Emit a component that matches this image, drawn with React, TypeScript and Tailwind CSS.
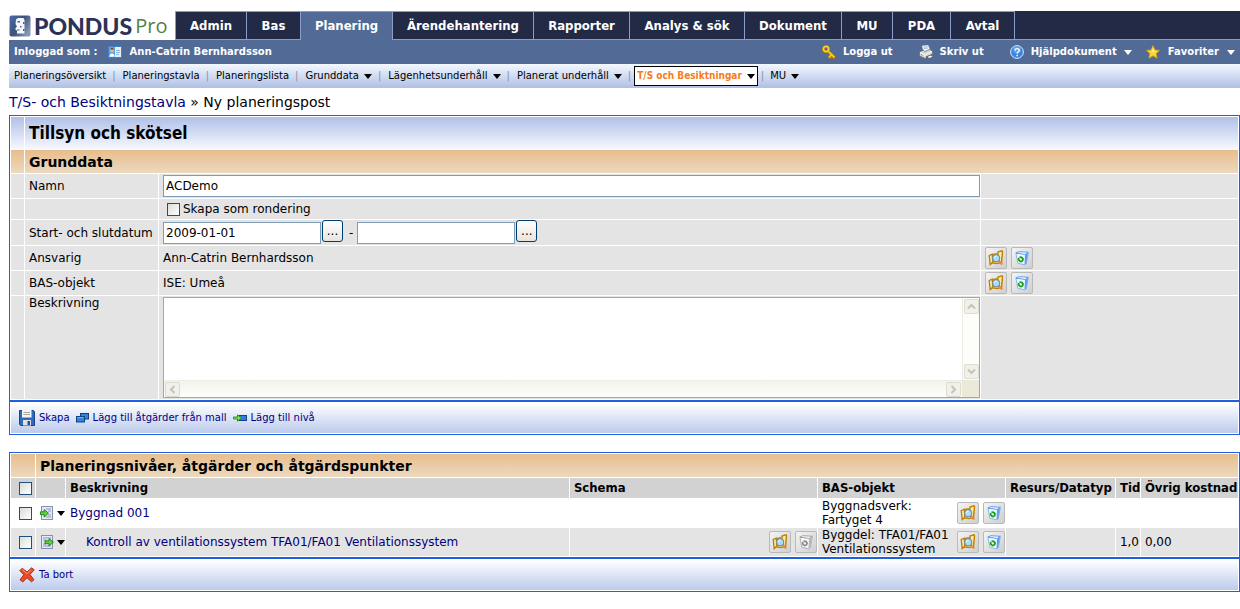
import React from "react";

type IconProps = { className?: string };

const Caret = ({ className = "" }: IconProps) => (
  <svg viewBox="0 0 8 5" width="8" height="5" className={"shrink-0 " + className} aria-hidden="true">
    <path d="M0 0h8L4 5z" fill="currentColor" />
  </svg>
);

const LogoMark = () => (
  <svg viewBox="0 0 22 22" width="22" height="22" className="shrink-0" aria-hidden="true">
    <defs>
      <linearGradient id="lm" x1="0" y1="0" x2="1" y2="0.600">
        <stop offset="0" stopColor="#4a6ea8" />
        <stop offset="0.550" stopColor="#3c507c" />
        <stop offset="1" stopColor="#8296b8" />
      </linearGradient>
    </defs>
    <rect x="0.500" y="0.500" width="21" height="21" rx="2" fill="url(#lm)" />
    <path d="M7 4.500L9 3h5.500L15.500 5v13.500H8v-3L6.500 15v-2L8 11.500 6.500 9z" fill="#f4f7fb" />
    <path d="M8.500 6h2.500v1.500H8.500zM14 7h1.500v2H14zM11 11h1.500v1.500H11zM8 14.500h2.500v1H8zM14 14h1.500v2H14z" fill="#47608f" />
  </svg>
);

const CardIcon = () => (
  <svg viewBox="0 0 14 12" width="14" height="12" className="shrink-0" aria-hidden="true">
    <rect x="0.500" y="0.500" width="13" height="11" rx="1" fill="#e6f1fc" stroke="#3b7fd0" />
    <rect x="1" y="1" width="6" height="10" fill="#5aa5ee" />
    <circle cx="4" cy="4.500" r="1.900" fill="#e9b58a" />
    <path d="M2.200 3.500c.5-2 3.200-2 3.700 0z" fill="#7c4316" />
    <path d="M1.500 10.800c0-4.500 5-4.500 5 0z" fill="#fff" />
    <path d="M8 4.500h4M8 6.500h4M8 8.500h3" stroke="#8fb3dc" />
  </svg>
);

const KeyIcon = () => (
  <svg viewBox="0 0 14 14" width="14" height="14" className="shrink-0" aria-hidden="true">
    <path d="M6 6l6 6M9.500 9.500L7.500 12M12 12l-2 1.500" stroke="#a87400" strokeWidth="3" strokeLinecap="round" />
    <path d="M6 6l6 6M9.500 9.500L7.500 12" stroke="#fbc81c" strokeWidth="1.800" strokeLinecap="round" />
    <circle cx="4" cy="4" r="2.600" fill="none" stroke="#a87400" strokeWidth="2.800" />
    <circle cx="4" cy="4" r="2.600" fill="none" stroke="#fbd02c" strokeWidth="1.800" />
  </svg>
);

const PrinterIcon = () => (
  <svg viewBox="0 0 14 14" width="14" height="14" className="shrink-0" aria-hidden="true">
    <path d="M3 1l6-1 2 5-6 2z" fill="#fff" stroke="#b9c4d4" strokeWidth="0.600" />
    <path d="M4.500 2.200l4-.6M5 3.600l4-.7" stroke="#6b90c8" strokeWidth="0.700" />
    <path d="M0.500 7l4-2 1 1.500 5-2.200 3 2v4L6 13.500 0.500 11z" fill="#d5d5d3" stroke="#66686b" strokeWidth="0.700" />
    <path d="M1 7.500l5 2.500 7-3.500" stroke="#fff" fill="none" />
    <path d="M7 11.500l6-2.600v1.600L7 13.200z" fill="#55585c" />
    <path d="M8.500 12l3-1.500 2 1-3 1.500z" fill="#fff" />
    <path d="M2 9.500l1.500.7" stroke="#44b038" />
  </svg>
);

const HelpIcon = () => (
  <svg viewBox="0 0 14 14" width="14" height="14" className="shrink-0" aria-hidden="true">
    <circle cx="7" cy="7" r="6.400" fill="#3d86dc" stroke="#dbe9fa" strokeWidth="1" />
    <circle cx="7" cy="4.800" r="3.800" fill="#7db4ef" opacity="0.600" />
    <path d="M5 5.500c0-2.600 4.200-2.500 4.200 0C9.200 7 7.100 7 7.100 8.500M7.100 9.800v1.400" stroke="#fff" strokeWidth="1.400" fill="none" />
  </svg>
);

const StarIcon = () => (
  <svg viewBox="0 0 14 14" width="14" height="14" className="shrink-0" aria-hidden="true">
    <path d="M7 .6l1.900 4.300 4.600.5-3.400 3.100 1 4.700L7 10.800l-4.100 2.400 1-4.700L.5 5.400l4.600-.5z" fill="#fbd63a" stroke="#d9a315" strokeWidth="0.800" />
    <path d="M7 2.500l1 3.200 3 .3-5 1z" fill="#fff2a0" />
  </svg>
);

const FolderSearchIcon = () => (
  <svg viewBox="0 0 16 16" width="16" height="16" className="shrink-0" aria-hidden="true">
    <path d="M1.200 5.500l3-1.300.6 8-2.600 2.400z" fill="#fdeeb0" stroke="#b87c04" strokeWidth="1.300" />
    <path d="M4.600 12.800L5 4.600l3.200-.8.600 1 1.200-.4V2l4-1.200.5 1-1 10.600-4.500 1z" fill="#fdeeb0" stroke="#c08404" strokeWidth="1.500" />
    <path d="M10.800 11l2.700 2.700" stroke="#f0853c" strokeWidth="2.400" strokeLinecap="round" />
    <circle cx="8.200" cy="8.200" r="3.500" fill="#a9def8" stroke="#6d8ba5" strokeWidth="1.100" />
    <path d="M6.200 8c.2-1.300 1-1.900 2.200-1.900" stroke="#fff" fill="none" />
  </svg>
);

const BinIcon = ({ muted = false }: { muted?: boolean }) => {
  const edge = muted ? "#9a9a9a" : "#4a94ee";
  const soft = muted ? "#aaaaaa" : "#7ab0f0";
  const shade = muted ? "#b8b8b8" : "#5b9ff2";
  const sign = muted ? "#8a8a8a" : "#18a018";
  return (
    <svg viewBox="0 0 16 16" width="16" height="16" className="shrink-0" aria-hidden="true">
      <path d="M2 3.500l1.800 9.700 6.700 1.600 1.700-1 2.200-11z" fill="#f3f8ff" stroke={soft} strokeWidth="0.900" />
      <path d="M11 4.800l3-1.800-1.800 10.700-1.700 1z" fill={shade} />
      <path d="M1.800 3L5 1.700l9.300.6L11.200 4.500z" fill="#fff" stroke={edge} strokeWidth="0.900" />
      <ellipse cx="6.800" cy="9.300" rx="2.200" ry="2" fill="none" stroke={sign} strokeWidth="1.700" strokeDasharray="5.800 0.700" transform="rotate(40 6.800 9.300)" />
    </svg>
  );
};

const SaveIcon = () => (
  <svg viewBox="0 0 16 16" width="16" height="16" className="shrink-0" aria-hidden="true">
    <path d="M.5.500h14l1 1.500v13.500h-14L.5 14z" fill="#2d6cbb" stroke="#1c4384" />
    <rect x="3" y="0" width="9.500" height="7.500" fill="#f4f4f2" />
    <path d="M4.500 2.500h6.500M4.500 4.500h6.500" stroke="#a9a9a9" />
    <rect x="4" y="10" width="8" height="5.500" fill="#dfe3e8" />
    <rect x="8.500" y="11" width="2.500" height="4" fill="#27518f" />
  </svg>
);

const LayersIcon = () => (
  <svg viewBox="0 0 13 10" width="13" height="10" className="shrink-0" aria-hidden="true">
    <rect x="4.500" y="0.500" width="8" height="5.500" fill="#2f86e0" stroke="#12417e" />
    <rect x="0.500" y="3.500" width="8" height="5.500" fill="#2f86e0" stroke="#12417e" />
    <path d="M1.500 4.500h6" stroke="#79b6f4" />
  </svg>
);

const AddLevelIcon = () => (
  <svg viewBox="0 0 14 8" width="14" height="8" className="shrink-0" aria-hidden="true">
    <rect x="6.500" y="1.500" width="7" height="5" fill="#2f7fe0" stroke="#173f88" />
    <path d="M.5 3h4V.8L8.500 4 4.500 7.200V5h-4z" fill="#7fe052" stroke="#1f8a1c" strokeWidth="0.900" />
  </svg>
);

const RowIcon = ({ outward = false }: { outward?: boolean }) => (
  <svg viewBox="0 0 14 14" width="14" height="14" className="shrink-0" aria-hidden="true">
    <rect x="1.500" y="0.500" width="11" height="13" fill="#e6e8f4" stroke="#8a8cb4" />
    <path d={outward ? "M3 3h8M3 5h3M3 9h3M3 11h8" : "M6 3h5M8 5h3M8 9h3M6 11h5"} stroke="#8d96bd" />
    {outward ? (
      <path d="M5 5.800h4V3.500L13.400 7.200 9 11V8.700H5z" fill="#5fd33c" stroke="#1c7d18" strokeWidth="0.900" />
    ) : (
      <path d="M.5 5.800h3.700V3.500l4.300 3.700L4.200 11V8.700H.5z" fill="#5fd33c" stroke="#1c7d18" strokeWidth="0.900" />
    )}
  </svg>
);

const DeleteIcon = () => (
  <svg viewBox="0 0 16 16" width="16" height="16" className="shrink-0" aria-hidden="true">
    <path d="M3.200 1.200L8 5l4.500-4.200 2.700 2-4.200 4.700 4 5.300-2.500 2L8 10.800 3.800 15 1 12.800l3.800-5L.8 3.600z" fill="#ec4a26" stroke="#a82a12" strokeWidth="0.900" />
    <path d="M3.300 2.600L8 6.600l4.300-4" stroke="#ff9a7c" fill="none" />
  </svg>
);

const Chevron = ({ d }: { d: string }) => (
  <svg viewBox="0 0 9 9" width="9" height="9" aria-hidden="true">
    <path d={d} fill="none" stroke="#c5c4ba" strokeWidth="2" />
  </svg>
);

const tabs = [
  { label: "Admin", width: "w-[71px]" },
  { label: "Bas", width: "w-[54px]" },
  { label: "Planering", width: "w-[92px]", active: true },
  { label: "Ärendehantering", width: "w-[141px]" },
  { label: "Rapporter", width: "w-[96px]" },
  { label: "Analys & sök", width: "w-[115px]" },
  { label: "Dokument", width: "w-[97px]" },
  { label: "MU", width: "w-[51px]" },
  { label: "PDA", width: "w-[58px]" },
  { label: "Avtal", width: "w-[64px]" },
];

const subItems = [
  { label: "Planeringsöversikt", divider: "" },
  { label: "Planeringstavla", divider: "pr-[7px] pl-[6px]" },
  { label: "Planeringslista", divider: "pr-[7px] pl-[6px]" },
  { label: "Grunddata", divider: "pr-[7px] pl-[6px]", menu: true },
  { label: "Lägenhetsunderhåll", divider: "pr-[7px] pl-[6px]", menu: true },
  { label: "Planerat underhåll", divider: "pr-[7px] pl-[6px]", menu: true },
  { label: "T/S och Besiktningar", divider: "pr-[3px] pl-[6px]", menu: true, active: true },
  { label: "MU", divider: "pr-[6px] pl-[3px]", menu: true },
];

const BOLD = "font-['DejaVu_Sans_Condensed','DejaVu_Sans',sans-serif] font-bold";
const CHECK =
  "block size-[13px] shrink-0 appearance-none border border-[#1c5180] bg-linear-to-br from-[#dcdcd7] to-white checked:bg-[#1c5180]";
const FIELD = "h-[22px] min-w-0 border border-[#7f9db9] bg-white px-[2px] text-[12px] leading-[18px] text-black";

const IconButton = ({ label, children }: { label: string; children: React.ReactNode }) => (
  <button
    type="button"
    aria-label={label}
    className="flex size-[22px] shrink-0 items-center justify-center rounded-[2px] border border-[#b9b9b9] bg-linear-to-br from-[#f4f4f4] to-[#cfcfcf]"
  >
    {children}
  </button>
);

const PickButtons = ({ muted = false }: { muted?: boolean }) => (
  <div className="flex shrink-0 gap-1">
    <IconButton label="Välj">
      <FolderSearchIcon />
    </IconButton>
    <IconButton label="Rensa">
      <BinIcon muted={muted} />
    </IconButton>
  </div>
);

const DateButton = () => (
  <button
    type="button"
    aria-label="Välj datum"
    className="mx-px flex h-[22px] w-[21px] shrink-0 items-center justify-center self-start rounded-[3px] border border-[#003c74] bg-linear-to-b from-white to-[#e6e5dc] text-[12px] text-black"
  >
    ...
  </button>
);

const ScrollButton = ({ label, d }: { label: string; d: string }) => (
  <button
    type="button"
    disabled
    aria-label={label}
    className="flex size-[15px] shrink-0 items-center justify-center rounded-[2px] border border-[#dddcd0] bg-[#f1f0e9]"
  >
    <Chevron d={d} />
  </button>
);

const Row = ({
  label,
  id,
  height,
  actions,
  top = false,
  children,
}: {
  label?: string;
  id?: string;
  height: string;
  actions?: React.ReactNode;
  top?: boolean;
  children: React.ReactNode;
}) => (
  <>
    <div className={"bg-[#e4e4e4] " + height} />
    <div className={"flex bg-[#e4e4e4] pl-1 whitespace-nowrap " + (top ? "items-start" : "items-center")}>
      {label && (id ? <label htmlFor={id}>{label}</label> : <span>{label}</span>)}
    </div>
    <div className="flex min-w-0 items-center bg-[#e4e4e4] pl-1">{children}</div>
    <div className="flex items-center bg-[#e4e4e4] pl-1">{actions}</div>
  </>
);

const ActionBar = ({ children }: { children: React.ReactNode }) => (
  <div className="border-t-2 border-[#1f5fe0] p-px">
    <div className="flex h-[30px] items-center gap-[6px] bg-linear-to-b from-white to-[#bccbec] pl-2 text-[10px] text-[#000080]">
      {children}
    </div>
  </div>
);

const Action = ({ label, icon }: { label: string; icon: React.ReactNode }) => (
  <button type="button" className="flex items-center gap-1">
    {icon}
    {label}
  </button>
);

const HEAD = "bg-[#d2d2d2] pl-1 text-left";

export default function App() {
  return (
    <div className="pt-[11px] pl-[9px] font-['DejaVu_Sans',sans-serif] text-[12px] leading-[14px] text-black">
      <header>
        <nav className="flex h-[29px] bg-[#232a45]" aria-label="Huvudmeny">
          <div className="flex w-[166px] shrink-0 items-center bg-white">
            <LogoMark />
            <span className="ml-[3px] font-['Lato',sans-serif] text-[23px] leading-6 font-black text-[#2b3357]">PONDUS</span>
            <span className="ml-[3px] font-['Open_Sans',sans-serif] text-[20px] leading-6 text-[#56804a]">Pro</span>
          </div>
          {tabs.map((t) => (
            <a
              key={t.label}
              href="#"
              className={
                "flex shrink-0 items-center justify-center border-t border-l border-[#8d9bcb] text-[13px] text-white " +
                BOLD +
                " " +
                t.width +
                (t.active ? " bg-[#516a96]" : " border-b")
              }
            >
              {t.label}
            </a>
          ))}
          <div className="grow border-b border-l border-[#8d9bcb]" />
        </nav>

        <div className="flex h-6 items-center bg-[#516a96] pr-[5px] pl-[5px] text-[10px] font-bold text-white">
          <span>Inloggad som :</span>
          <span className="ml-[10px] flex items-center gap-2">
            <CardIcon />
            Ann-Catrin Bernhardsson
          </span>
          <div className="ml-auto flex items-center gap-[26px]">
            <a href="#" className="flex items-center gap-[7px]">
              <KeyIcon />
              Logga ut
            </a>
            <a href="#" className="flex items-center gap-[7px]">
              <PrinterIcon />
              Skriv ut
            </a>
            <div className="flex gap-[14px]">
              <a href="#" className="flex items-center gap-[7px]">
                <HelpIcon />
                Hjälpdokument
                <Caret />
              </a>
              <a href="#" className="flex items-center gap-2">
                <StarIcon />
                Favoriter
                <Caret />
              </a>
            </div>
          </div>
        </div>

        <nav
          className="flex h-6 items-center bg-linear-to-b from-[#f4f8ff] to-[#b0c0e4] pl-[5px] text-[10px] text-black"
          aria-label="Undermeny"
        >
          {subItems.map((s, i) => (
            <React.Fragment key={s.label}>
              {i > 0 && <span className={"text-[#8a8fa0] " + s.divider}>|</span>}
              <a
                href="#"
                className={
                  "flex items-center gap-[5px] whitespace-nowrap" +
                  (s.active ? " h-5 border border-black bg-white px-[2px] text-[#f57c1c] " + BOLD : "")
                }
              >
                {s.label}
                {s.menu && <Caret className="text-black" />}
              </a>
            </React.Fragment>
          ))}
        </nav>
      </header>

      <main>
        <div className="flex h-[27px] items-center text-[14px]">
          <p>
            <a href="#" className="text-[#000080]">
              T/S- och Besiktningstavla
            </a>{" "}
            » Ny planeringspost
          </p>
        </div>

        <form className="border border-[#1f5fe0]">
          <div className="grid grid-cols-[13px_133px_minmax(0,821fr)_minmax(0,257fr)] gap-x-px p-px">
            <div className="bg-linear-to-b from-[#b0c0e6] to-[#f8faff]" />
            <h1
              className={
                "col-span-3 flex h-[33px] items-center bg-linear-to-b from-[#b0c0e6] to-[#f8faff] pb-px pl-1 text-[17px] " +
                BOLD
              }
            >
              Tillsyn och skötsel
            </h1>
            <div className="bg-linear-to-b from-[#e8bd8c] to-[#ecd9c0]" />
            <h2 className="col-span-3 flex h-[23px] items-center bg-linear-to-b from-[#e8bd8c] to-[#ecd9c0] pl-1 text-[14px] font-bold">
              Grunddata
            </h2>
          </div>
          <div className="grid grid-cols-[13px_133px_minmax(0,821fr)_minmax(0,257fr)] gap-px px-px pb-px">
            <Row label="Namn" id="namn" height="h-6">
              <input id="namn" type="text" defaultValue="ACDemo" className={FIELD + " w-full"} />
            </Row>
            <Row height="h-5">
              <label className="flex items-center gap-[3px] pl-1">
                <input type="checkbox" className={CHECK} />
                Skapa som rondering
              </label>
            </Row>
            <Row label="Start- och slutdatum" id="start" height="h-[25px]">
              <input id="start" type="text" defaultValue="2009-01-01" className={FIELD + " w-[158px]"} />
              <DateButton />
              <span className="pr-1 pl-[5px]">-</span>
              <input aria-label="Slutdatum" type="text" className={FIELD + " w-[158px]"} />
              <DateButton />
            </Row>
            <Row label="Ansvarig" height="h-6" actions={<PickButtons />}>
              Ann-Catrin Bernhardsson
            </Row>
            <Row label="BAS-objekt" height="h-6" actions={<PickButtons />}>
              ISE: Umeå
            </Row>
            <Row label="Beskrivning" id="beskrivning" height="h-[103px]" top>
              <div className="grid h-[101px] w-full grid-cols-[minmax(0,1fr)_17px] grid-rows-[minmax(0,1fr)_17px] border border-[#a0a8ae] bg-white">
                <textarea id="beskrivning" className="resize-none bg-white px-[2px] outline-none" />
                <div className="flex flex-col items-center justify-between border-l border-[#eeede5] bg-[#fdfdfa] py-px">
                  <ScrollButton label="Rulla upp" d="M1 6.500l3.500-3.500L8 6.500" />
                  <ScrollButton label="Rulla ned" d="M1 2.500L4.500 6 8 2.500" />
                </div>
                <div className="flex items-center justify-between border-t border-[#eeede5] bg-linear-to-b from-[#f3f2ec] to-[#fefefb] px-px">
                  <ScrollButton label="Rulla vänster" d="M6.500 1L3 4.500 6.500 8" />
                  <ScrollButton label="Rulla höger" d="M2.500 1L6 4.500 2.500 8" />
                </div>
                <div className="bg-[#ece9d8]" />
              </div>
            </Row>
          </div>
          <ActionBar>
            <Action label="Skapa" icon={<SaveIcon />} />
            <Action label="Lägg till åtgärder från mall" icon={<LayersIcon />} />
            <Action label="Lägg till nivå" icon={<AddLevelIcon />} />
          </ActionBar>
        </form>

        <section className="mt-[17px] border border-[#1f5fe0]">
          <table className="w-full table-fixed border-separate border-spacing-px">
            <colgroup>
              <col className="w-[24px]" />
              <col className="w-[29px]" />
              <col />
              <col className="w-[247px]" />
              <col className="w-[187px]" />
              <col className="w-[109px]" />
              <col className="w-[24px]" />
              <col className="w-[97px]" />
            </colgroup>
            <thead>
              <tr className="h-[23px]">
                <td className="bg-linear-to-b from-[#e8bd8c] to-[#ecd9c0] p-0" />
                <th
                  colSpan={7}
                  className="bg-linear-to-b from-[#e8bd8c] to-[#ecd9c0] p-0 pl-1 text-left text-[14px] font-bold"
                >
                  Planeringsnivåer, åtgärder och åtgärdspunkter
                </th>
              </tr>
              <tr className={"h-5 text-[13px] whitespace-nowrap " + BOLD}>
                <td className="bg-[#d2d2d2] p-0 pl-2">
                  <input type="checkbox" aria-label="Markera alla" className={CHECK} />
                </td>
                <td className="bg-[#d2d2d2] p-0" />
                <th className={HEAD}>Beskrivning</th>
                <th className={HEAD}>Schema</th>
                <th className={HEAD}>BAS-objekt</th>
                <th className={HEAD}>Resurs/Datatyp</th>
                <th className={HEAD}>Tid</th>
                <th className={HEAD}>Övrig kostnad</th>
              </tr>
            </thead>
            <tbody>
              <tr className="h-7">
                <td className="p-0 pl-2">
                  <input type="checkbox" aria-label="Markera Byggnad 001" className={CHECK} />
                </td>
                <td className="p-0 pl-1">
                  <button type="button" aria-label="Meny för Byggnad 001" className="flex items-center gap-[3px]">
                    <RowIcon />
                    <Caret />
                  </button>
                </td>
                <td className="p-0 pl-1">
                  <a href="#" className="text-[#000080]">
                    Byggnad 001
                  </a>
                </td>
                <td className="p-0" />
                <td className="p-0 pl-1">
                  <div className="flex items-center justify-between">
                    <span>
                      Byggnadsverk:
                      <br />
                      Fartyget 4
                    </span>
                    <PickButtons />
                  </div>
                </td>
                <td />
                <td />
                <td />
              </tr>
              <tr className="h-7 *:bg-[#e4e4e4]">
                <td className="p-0 pl-2">
                  <input type="checkbox" aria-label="Markera Kontroll av ventilationssystem" className={CHECK} />
                </td>
                <td className="p-0 pl-1">
                  <button type="button" aria-label="Meny för Kontroll" className="flex items-center gap-[3px]">
                    <RowIcon outward />
                    <Caret />
                  </button>
                </td>
                <td className="p-0 pl-5">
                  <a href="#" className="text-[#000080]">
                    Kontroll av ventilationssystem TFA01/FA01 Ventilationssystem
                  </a>
                </td>
                <td className="p-0">
                  <div className="flex justify-end">
                    <PickButtons muted />
                  </div>
                </td>
                <td className="p-0 pl-1">
                  <div className="flex items-center justify-between whitespace-nowrap">
                    <span>
                      Byggdel: TFA01/FA01
                      <br />
                      Ventilationssystem
                    </span>
                    <PickButtons />
                  </div>
                </td>
                <td />
                <td className="p-0 pl-1">1,0</td>
                <td className="p-0 pl-1">0,00</td>
              </tr>
            </tbody>
          </table>
          <ActionBar>
            <Action label="Ta bort" icon={<DeleteIcon />} />
          </ActionBar>
        </section>
      </main>
    </div>
  );
}
